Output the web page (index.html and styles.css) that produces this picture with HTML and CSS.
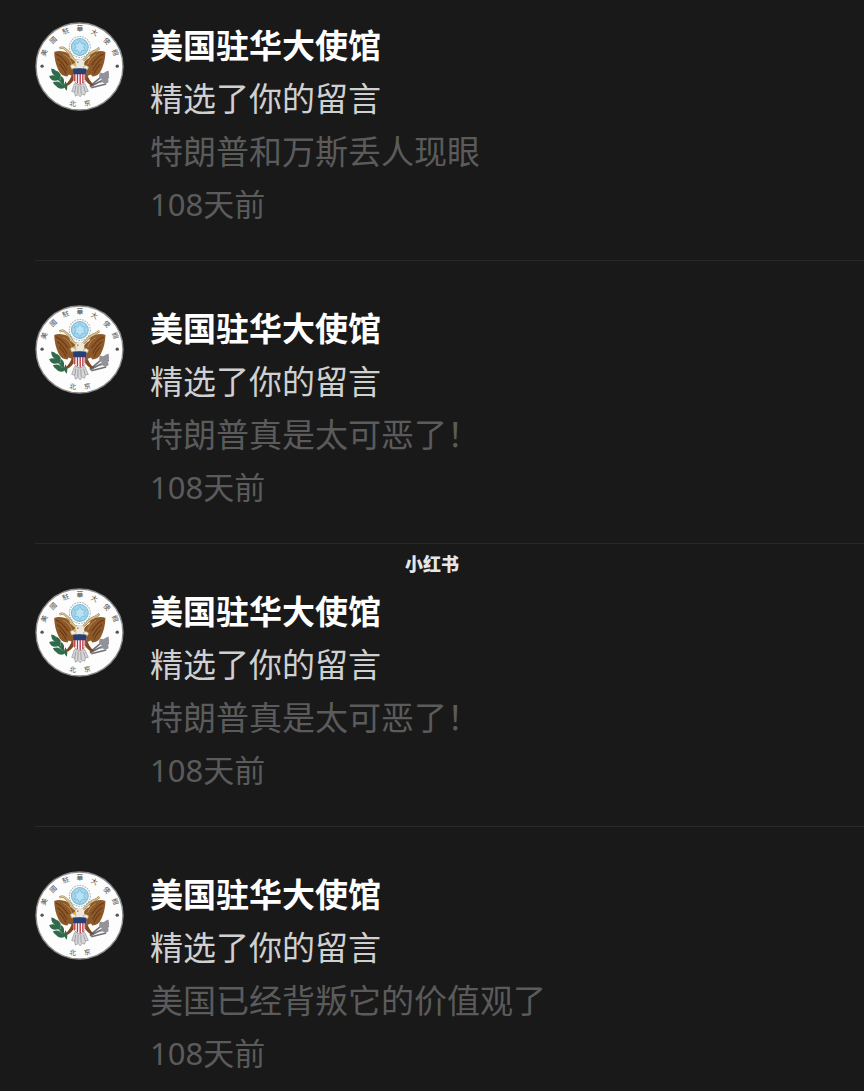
FILE: index.html
```html
<!DOCTYPE html>
<html lang="zh-CN">
<head>
<meta charset="utf-8">
<meta name="viewport" content="width=device-width, initial-scale=1">
<title>留言通知</title>
<link rel="stylesheet" href="styles.css">
</head>
<body>
<svg class="defs" aria-hidden="true">
  <defs>
    <symbol id="seal" viewBox="21 22 264 264">
      <circle cx="153" cy="154" r="129" fill="#fdfdfd" stroke="#8b8b8b" stroke-width="4"/>
      <g class="seal-text">
        <text transform="translate(55 116) rotate(-66)">美</text>
        <text transform="translate(80 81) rotate(-44)">國</text>
        <text transform="translate(115 55) rotate(-22)">駐</text>
        <text transform="translate(154 50)">華</text>
        <text transform="translate(194 60) rotate(24)">大</text>
        <text transform="translate(229 84) rotate(44)">使</text>
        <text transform="translate(253 116) rotate(66)">館</text>
        <text transform="translate(132 271) rotate(8)">北</text>
        <text transform="translate(177 270) rotate(-8)">京</text>
      </g>
      <circle cx="42" cy="153" r="5" fill="#555"/>
      <circle cx="265" cy="153" r="5" fill="#555"/>
      <!-- constellation -->
      <circle cx="154" cy="96" r="31" fill="#fff" stroke="#a9b5ae" stroke-width="3" stroke-dasharray="5 3"/>
      <circle cx="154" cy="96" r="25" fill="#a5d5ec" stroke="#75b7d8" stroke-width="3"/>
      <path d="M154 77l6 10h11l-6 9 6 10h-11l-6 10-6-10h-11l6-10-6-9h11z" fill="#b9e3f4" stroke="#6fb5d6" stroke-width="2"/>
      <!-- olive branch -->
      <path d="M72 168q17 24 40 46" fill="none" stroke="#397252" stroke-width="5"/>
      <path d="M69 160q20 2 17 22q-17-3-17-22zM63 182q22-7 29 12q-23 8-29-12zM74 201q19-8 28 8q-17 13-28-8zM85 166q19 10 9 29q-16-9-9-29zM99 182q14 11 5 27q-14-12-5-27zM84 213q17-11 29 1q-14 12-29-1zM111 198q9 12 4 28q-12-12-4-28z" fill="#2f6b4a"/>
      <!-- arrows -->
      <path d="M184 212l52-42M184 214l56-29M188 217l44-11" fill="none" stroke="#6f6f77" stroke-width="5"/>
      <path d="M213 172l10 2 16-8 2 13-3 8 1 14-9 5-9-5-7 3 5-13-8-6z" fill="#92929a"/>
      <!-- tail -->
      <path d="M138 205h31l10 23-8 1-3 10-7-3-6 8-6-7-8 5-3-12-8-2z" fill="#d7d7d9" stroke="#929298" stroke-width="2"/>
      <path d="M142 211l-3 20M149 211l-1 24M157 211l1 24M165 211l5 18" stroke="#85858b" stroke-width="2"/>
      <!-- wings and legs -->
      <path d="M132 174q-8 26-22 34l8 3q17-10 23-28zM174 174q9 26 22 34l-8 3q-17-10-23-28z" fill="#7b481f"/>
      <path d="M78 111q1 31 13 55 8 17 26 18l4-6 11 4 11-36q-7-14-17-17-3-16-18-19-18-5-30 1zM230 111q-1 31-13 55-8 17-26 18l-4-6-11 4-11-36q7-14 17-17 3-16 18-19 18-5 30 1z" fill="#8d5929"/>
      <path d="M82 117q17 4 37 33M87 131q15 9 29 35M93 146q13 13 20 29M225 117q-17 4-36 33M220 131q-15 9-28 35M215 146q-13 13-19 29" fill="none" stroke="#673817" stroke-width="3"/>
      <path d="M105 118q18 8 26 29M202 118q-17 8-25 29" fill="none" stroke="#b68649" stroke-width="3"/>
      <!-- ribbon -->
      <path d="M94 101q7-6 15 0 16 12 22 26 8 13 20 10 12 2 22-10 10-13 28-20l11-8" fill="none" stroke="#9a794c" stroke-width="7"/>
      <path d="M94 101q7-6 15 0 16 12 22 26 8 13 20 10 12 2 22-10 10-13 28-20l11-8" fill="none" stroke="#d9c694" stroke-width="4"/>
      <!-- head -->
      <path d="M139 163l2-23q5-10 17-8 10 4 9 14l3 17z" fill="#ece8dc"/>
      <path d="M126 151q7-7 16 0v10h-13zM165 154q8-7 15 2l-4 8h-11z" fill="#f1eee5" stroke="#b9a57b" stroke-width="2"/>
      <path d="M140 142l-8 6 7 5 5-6z" fill="#d6b64d"/>
      <circle cx="148" cy="141" r="2" fill="#3c352d"/>
      <!-- shield -->
      <path d="M135 162q18-4 37 0v27q0 13-18 20-19-7-19-20z" fill="#fff" stroke="#9c7770" stroke-width="2"/>
      <path d="M139 174v23M147 174v30M155 174v33M163 174v29M170 174v20" stroke="#b73743" stroke-width="4"/>
      <path d="M134 161q19-4 39 0v16h-39z" fill="#273f77"/>
    </symbol>
  </defs>
</svg>
<main class="page">
  <ul class="notices">
    <li class="notice">
      <svg class="avatar" role="img" aria-label="美国驻华大使馆"><use href="#seal"/></svg>
      <div class="body">
        <h2 class="name">美国驻华大使馆</h2>
        <p class="action">精选了你的留言</p>
        <p class="comment">特朗普和万斯丢人现眼</p>
        <p class="date">108天前</p>
      </div>
    </li>
    <li class="notice">
      <svg class="avatar" role="img" aria-label="美国驻华大使馆"><use href="#seal"/></svg>
      <div class="body">
        <h2 class="name">美国驻华大使馆</h2>
        <p class="action">精选了你的留言</p>
        <p class="comment">特朗普真是太可恶了！</p>
        <p class="date">108天前</p>
      </div>
    </li>
    <li class="notice">
      <svg class="avatar" role="img" aria-label="美国驻华大使馆"><use href="#seal"/></svg>
      <div class="body">
        <h2 class="name">美国驻华大使馆</h2>
        <p class="action">精选了你的留言</p>
        <p class="comment">特朗普真是太可恶了！</p>
        <p class="date">108天前</p>
      </div>
    </li>
    <li class="notice">
      <svg class="avatar" role="img" aria-label="美国驻华大使馆"><use href="#seal"/></svg>
      <div class="body">
        <h2 class="name">美国驻华大使馆</h2>
        <p class="action">精选了你的留言</p>
        <p class="comment">美国已经背叛它的价值观了</p>
        <p class="date">108天前</p>
      </div>
    </li>
  </ul>
  <span class="watermark">小红书</span>
</main>
</body>
</html>
```
FILE: styles.css
```css
* {
  box-sizing: border-box;
}

body {
  margin: 0;
  background: #191919;
  color: #fff;
  font-family: "Noto Sans", "Noto Sans CJK SC", sans-serif;
}

.defs {
  position: absolute;
  width: 0;
  height: 0;
}

.page {
  position: relative;
}

.notices {
  margin: 0;
  padding: 0 0 0 35px;
  list-style: none;
}

.notice {
  display: flex;
  align-items: flex-start;
  gap: 26px;
  padding: 41px 0 29px;
  border-bottom: 1px solid #292929;
}

.notice:first-child {
  padding-top: 19px;
}

.notice:last-child {
  padding-bottom: 0;
  border-bottom: 0;
}

.avatar {
  flex: none;
  width: 89px;
  height: 89px;
  margin-top: 3px;
}

.seal-text {
  fill: #4c4c4c;
  font-family: "Noto Sans CJK TC", sans-serif;
  font-size: 20px;
  text-anchor: middle;
}

.body {
  flex: 1;
  min-width: 0;
}

.name,
.action,
.comment,
.date {
  margin: 0;
  font-size: 33px;
  font-weight: 400;
  line-height: 53px;
}

.name {
  font-weight: 700;
}

.action {
  color: #d0d0d0;
}

.comment {
  color: #5b5b5b;
}

.date {
  color: #5b5b5b;
  font-size: 31px;
}

.watermark {
  position: absolute;
  top: 552px;
  left: 50%;
  transform: translateX(-50%);
  color: #e6e6e6;
  font-size: 18px;
  font-weight: 900;
  line-height: 24px;
  white-space: nowrap;
}
```
